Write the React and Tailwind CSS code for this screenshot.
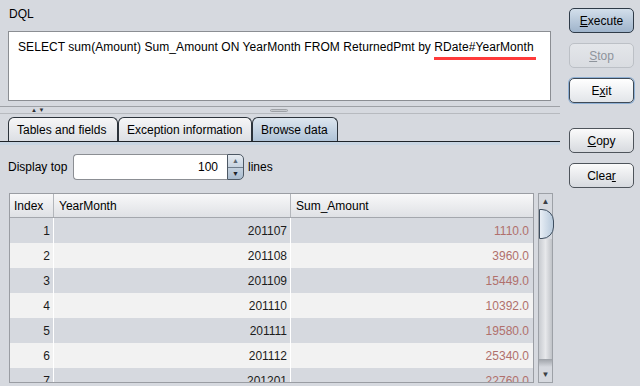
import React from 'react';

const rows = [
  [1, '201107', '1110.0'],
  [2, '201108', '3960.0'],
  [3, '201109', '15449.0'],
  [4, '201110', '10392.0'],
  [5, '201111', '19580.0'],
  [6, '201112', '25340.0'],
  [7, '201201', '22760.0'],
];

function Btn({ children, kind = 'plain', className = '' }) {
  const styles = {
    primary: 'border-[#2f3b48] bg-linear-to-b from-[#d3dfeb] to-[#9fb4cb] text-black',
    disabled: 'border-[#bcc0c6] bg-linear-to-b from-[#e4e6ea] to-[#d9dce1] text-[#8e949c]',
    focus: 'border-[#3e4a57] bg-linear-to-b from-[#ffffff] to-[#e2e5e9] text-black shadow-[0_0_0_1px_#8fb0d4]',
    plain: 'border-[#4e545b] bg-linear-to-b from-[#fbfbfb] to-[#d7dadf] text-black',
  };
  return (
    <div
      className={`flex h-[25px] w-[65px] items-center justify-center rounded-[5px] border ${styles[kind]} ${className}`}
    >
      {children}
    </div>
  );
}

function Tab({ children, selected, className = '' }) {
  return (
    <div
      className={`flex h-[24px] items-center rounded-t-[6px] border border-b-0 border-[#2c333b] px-[8px] ${
        selected
          ? 'bg-linear-to-b from-[#dde6ef] to-[#afc3d7]'
          : 'bg-linear-to-b from-[#f6f6f7] to-[#dcdfe4]'
      } ${className}`}
    >
      {children}
    </div>
  );
}

function ScrollBar() {
  return (
    <div className="ml-[4px] flex h-[190px] w-[15px] flex-col border border-[#9da1a7] bg-[#d6d9df]">
      <div className="flex h-[15px] items-center justify-center text-[8px] leading-none text-[#3a3f45]">
        ▲
      </div>
      <div className="-mr-[2px] h-[30px] rounded-r-[12px] border border-[#3f4f60] bg-linear-to-r from-[#e8eef5] to-[#b8cadc]" />
      <div className="flex-1 bg-linear-to-r from-[#c8cbd0] via-[#e7e8eb] to-[#c0c3c8]" />
      <div className="h-[8px] bg-linear-to-b from-[#9ea2a8] to-[#d6d9df]" />
      <div className="flex h-[15px] items-center justify-center text-[8px] leading-none text-[#3a3f45]">
        ▼
      </div>
    </div>
  );
}

export default function App() {
  return (
    <div className="flex h-[386px] w-[640px] overflow-hidden bg-[#d6d9df] font-['Liberation_Sans',Arial,sans-serif] text-[12px] text-black">
      <div className="flex w-[560px] flex-col">
        <div className="h-[31px] pl-[9px] pt-[5px]">DQL</div>
        <div className="ml-[8px] h-[70px] w-[543px] border border-[#8b8e93] bg-white pl-[9px] pt-[8px] leading-[14px] tracking-[0.07px]">
          SELECT sum(Amount) Sum_Amount ON YearMonth FROM ReturnedPmt by{' '}
          <span className="inline-block border-b-[3px] border-[#ff3a3a] pb-[3px] pr-[2px]">
            RDate#YearMonth
          </span>
        </div>

        {/* split divider */}
        <div className="mt-[5px] h-[1px] bg-[#9ea1a6]" />
        <div className="relative h-[6px]">
          <span className="absolute left-[31px] top-[0px] text-[6px] leading-[6px] text-[#2b2f34]">▲ ▼</span>
          <span className="absolute left-[270px] top-[2px] h-[3px] w-[18px] rounded-full border border-[#9ea1a6] bg-[#c7cace]" />
        </div>
        <div className="h-[1px] bg-[#b7babf]" />

        {/* tabs */}
        <div className="mt-[3px] flex pl-[8px]">
          <Tab className="w-[110px]">Tables and fields</Tab>
          <Tab className="w-[134px]">Exception information</Tab>
          <Tab selected className="w-[86px]">Browse data</Tab>
        </div>
        <div className="h-[1px] bg-[#1e2329]" />
        <div className="h-[3px] bg-[#c9d6e3]" />

        {/* display top */}
        <div className="mt-[9px] flex h-[26px] items-center pl-[8px]">
          <span className="w-[65px]">Display top</span>
          <div className="flex h-[26px] w-[154px] items-center justify-end rounded-l-[4px] border border-r-0 border-[#8b8e93] bg-white pr-[9px]">
            100
          </div>
          <div className="flex h-[26px] w-[17px] flex-col overflow-hidden rounded-r-[5px] border border-[#4d5864] bg-linear-to-b from-[#e6ebf1] to-[#a9bccf]">
            <div className="flex flex-1 items-center justify-center text-[7px] leading-none text-[#5c6670]">▲</div>
            <div className="h-[1px] bg-[#6f7d8b]" />
            <div className="flex flex-1 items-center justify-center text-[7px] leading-none text-[#1c2229]">▼</div>
          </div>
          <span className="ml-[4px]">lines</span>
        </div>

        {/* table */}
        <div className="ml-[9px] mt-[13px] flex">
          <div className="h-[190px] w-[525px] overflow-hidden border border-[#9a9da3]">
            <div className="flex h-[24px] border-b border-[#a4a7ad] bg-linear-to-b from-[#f8f8f9] to-[#dfe1e5]">
              <div className="flex w-[44px] items-center border-r border-[#b3b6bb] pl-[4px]">Index</div>
              <div className="flex w-[237px] items-center border-r border-[#b3b6bb] pl-[5px]">YearMonth</div>
              <div className="flex flex-1 items-center pl-[5px]">Sum_Amount</div>
            </div>
            {rows.map(([i, ym, amt]) => (
              <div
                key={i}
                className={`flex h-[25px] ${i % 2 === 1 ? 'bg-[#d6d9df]' : 'bg-[#f2f2f2]'}`}
              >
                <div className="flex w-[44px] items-center justify-end border-r border-white pr-[3px] text-[#1b1b1b]">
                  {i}
                </div>
                <div className="flex w-[237px] items-center justify-end border-r border-white pr-[3px] text-[#1b1b1b]">
                  {ym}
                </div>
                <div className="flex flex-1 items-center justify-end pr-[4px] text-[#b0706c]">{amt}</div>
              </div>
            ))}
          </div>
          <ScrollBar />
        </div>
      </div>

      {/* right buttons */}
      <div className="flex flex-col pl-[9px] pt-[8px]">
        <Btn kind="primary">
          <span className="underline">E</span>xecute
        </Btn>
        <Btn kind="disabled" className="mt-[10px]">
          <span className="underline">S</span>top
        </Btn>
        <Btn kind="focus" className="mt-[10px]">
          E<span className="underline">x</span>it
        </Btn>
        <Btn className="mt-[25px]">
          <span className="underline">C</span>opy
        </Btn>
        <Btn className="mt-[10px]">
          Clea<span className="underline">r</span>
        </Btn>
      </div>
    </div>
  );
}
